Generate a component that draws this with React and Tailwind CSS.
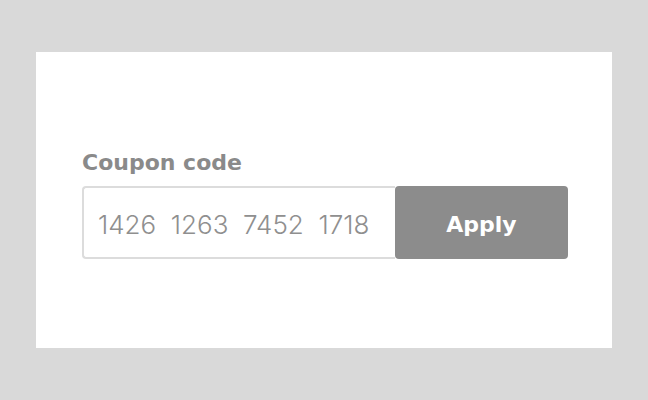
export default function App() {
  return (
    <div className="w-[648px] h-[400px] bg-[#d9d9d9] pt-[52px] pl-[36px]" style={{ fontFamily: "Inter, 'Noto Sans', sans-serif" }}>
      <div className="w-[576px] h-[296px] bg-white pt-[96px] pl-[46px]">
        <div className="text-[22px] leading-[30px] font-bold text-[#8a8a8a] font-['DejaVu_Sans',sans-serif]">Coupon code</div>
        <div className="flex mt-[8px] w-[486px] h-[73px]">
          <div className="flex-1 flex items-center border-2 border-r-0 border-[#dcdcdc] rounded-l-[4px] pl-[14px] pt-[3px]">
            <span className="whitespace-pre text-[26px] text-[#8f8f8f] font-light">1426  1263  7452  1718</span>
          </div>
          <div className="w-[173px] flex items-center justify-center bg-[#8c8c8c] rounded-[4px] text-white text-[22px] font-bold font-['DejaVu_Sans',sans-serif] pt-[3px]">Apply</div>
        </div>
      </div>
    </div>
  );
}
